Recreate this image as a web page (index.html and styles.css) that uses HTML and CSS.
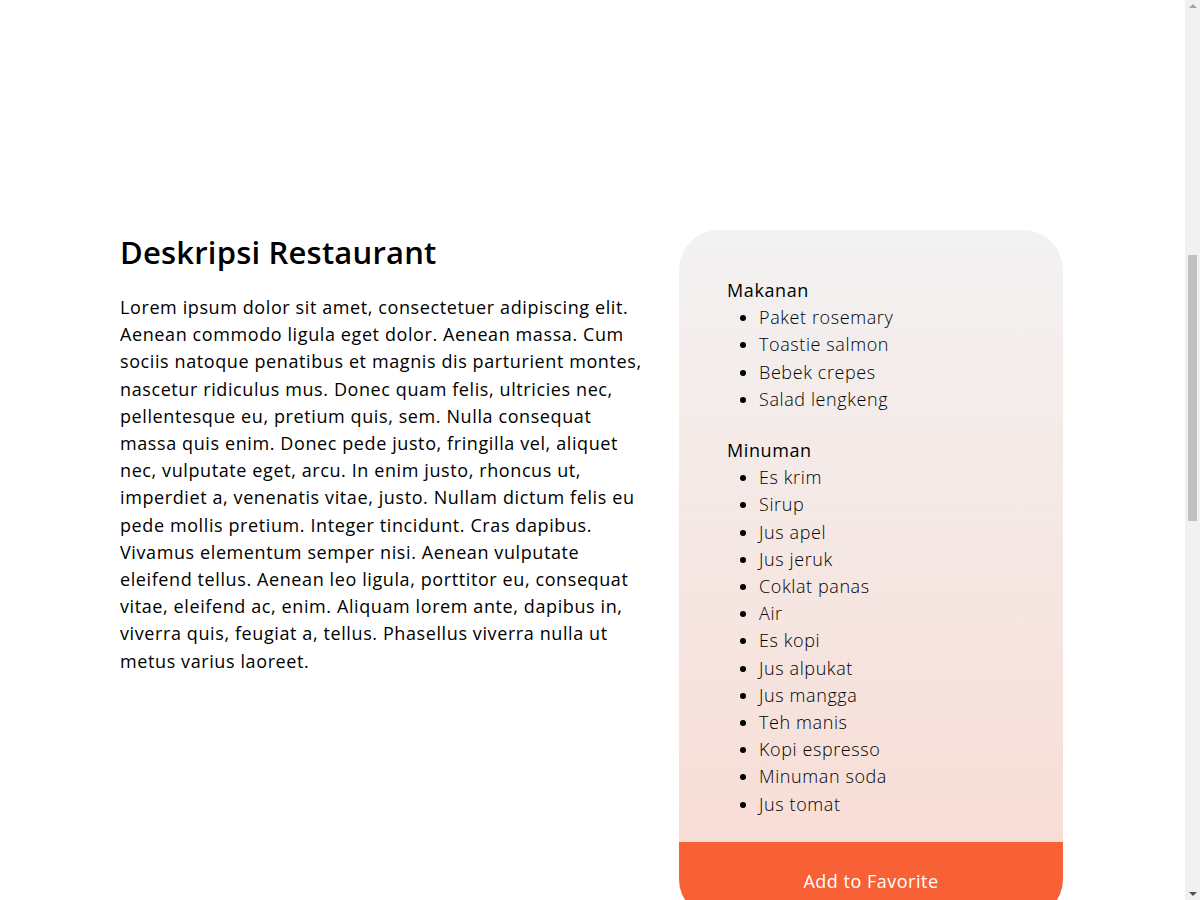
FILE: index.html
```html
<!DOCTYPE html>
<html lang="id">
<head>
<meta charset="utf-8">
<title>Detail Restaurant</title>
<link rel="stylesheet" href="styles.css">
</head>
<body>
<main class="detail">
  <section class="description">
    <h2 class="description-title">Deskripsi Restaurant</h2>
    <p class="description-text">Lorem ipsum dolor sit amet, consectetuer adipiscing elit. Aenean commodo ligula eget dolor. Aenean massa. Cum sociis natoque penatibus et magnis dis parturient montes, nascetur ridiculus mus. Donec quam felis, ultricies nec, pellentesque eu, pretium quis, sem. Nulla consequat massa quis enim. Donec pede justo, fringilla vel, aliquet nec, vulputate eget, arcu. In enim justo, rhoncus ut, imperdiet a, venenatis vitae, justo. Nullam dictum felis eu pede mollis pretium. Integer tincidunt. Cras dapibus. Vivamus elementum semper nisi. Aenean vulputate eleifend tellus. Aenean leo ligula, porttitor eu, consequat vitae, eleifend ac, enim. Aliquam lorem ante, dapibus in, viverra quis, feugiat a, tellus. Phasellus viverra nulla ut metus varius laoreet.</p>
  </section>
  <aside class="menu-card">
    <div class="menu-body">
      <div class="menu-group">
        <h3 class="menu-title">Makanan</h3>
        <ul class="menu-list">
          <li>Paket rosemary</li>
          <li>Toastie salmon</li>
          <li>Bebek crepes</li>
          <li>Salad lengkeng</li>
        </ul>
      </div>
      <div class="menu-group">
        <h3 class="menu-title">Minuman</h3>
        <ul class="menu-list">
          <li>Es krim</li>
          <li>Sirup</li>
          <li>Jus apel</li>
          <li>Jus jeruk</li>
          <li>Coklat panas</li>
          <li>Air</li>
          <li>Es kopi</li>
          <li>Jus alpukat</li>
          <li>Jus mangga</li>
          <li>Teh manis</li>
          <li>Kopi espresso</li>
          <li>Minuman soda</li>
          <li>Jus tomat</li>
        </ul>
      </div>
    </div>
    <button class="favorite-button" type="button">Add to Favorite</button>
  </aside>
</main>
<div class="scrollbar" aria-hidden="true">
  <span class="scroll-arrow scroll-arrow-up"></span>
  <span class="scroll-thumb"></span>
  <span class="scroll-arrow scroll-arrow-down"></span>
</div>
</body>
</html>
```
FILE: styles.css
```css
* { box-sizing: border-box; }

html, body {
  margin: 0;
  padding: 0;
  background: #ffffff;
}

body {
  font-family: "Open Sans", "Liberation Sans", sans-serif;
  color: #000000;
  font-size: 18px;
  line-height: 27.2px;
  letter-spacing: 0.6px;
  padding-right: 17px;
}

.detail {
  width: 943px;
  margin: 230px auto 200px;
  display: grid;
  grid-template-columns: 1fr 384px;
  column-gap: 32px;
  align-items: start;
}

.description-title {
  margin: 0 0 20px;
  font-size: 31px;
  font-weight: 600;
  line-height: 44px;
  letter-spacing: 0.2px;
}

.description-text {
  margin: 0;
}

.menu-card {
  border-radius: 40px;
  overflow: hidden;
  background: linear-gradient(180deg, #f2f2f2 0%, #f9dbd3 100%);
}

.menu-body {
  padding: 47px 48px 0;
}

.menu-group {
  margin-bottom: 24px;
}

.menu-title {
  margin: 0;
  font-size: 18px;
  font-weight: 400;
  line-height: 27.2px;
}

.menu-list {
  margin: 0;
  padding-left: 32px;
  font-weight: 300;
}

.favorite-button {
  display: block;
  width: 100%;
  border: 0;
  margin: 0;
  padding: 26px 0 24px;
  background: #f86035;
  color: #ffffff;
  font-family: inherit;
  font-size: 18px;
  font-weight: 500;
  line-height: 27px;
  letter-spacing: 0.5px;
  cursor: pointer;
}

/* imitation of the browser's vertical scrollbar seen in the capture */
.scrollbar {
  position: fixed;
  top: 0;
  right: 0;
  width: 15px;
  height: 100vh;
  background: #f1f1f1;
  display: flex;
  flex-direction: column;
  align-items: center;
}

.scroll-arrow {
  width: 0;
  height: 0;
  border-left: 4px solid transparent;
  border-right: 4px solid transparent;
}

.scroll-arrow-up {
  margin-top: 4px;
  border-bottom: 4px solid #a3a3a3;
}

.scroll-thumb {
  width: 9px;
  height: 266px;
  margin-top: 247px;
  background: #c1c1c1;
}

.scroll-arrow-down {
  margin-top: auto;
  margin-bottom: 4px;
  border-top: 4px solid #505050;
}
```
